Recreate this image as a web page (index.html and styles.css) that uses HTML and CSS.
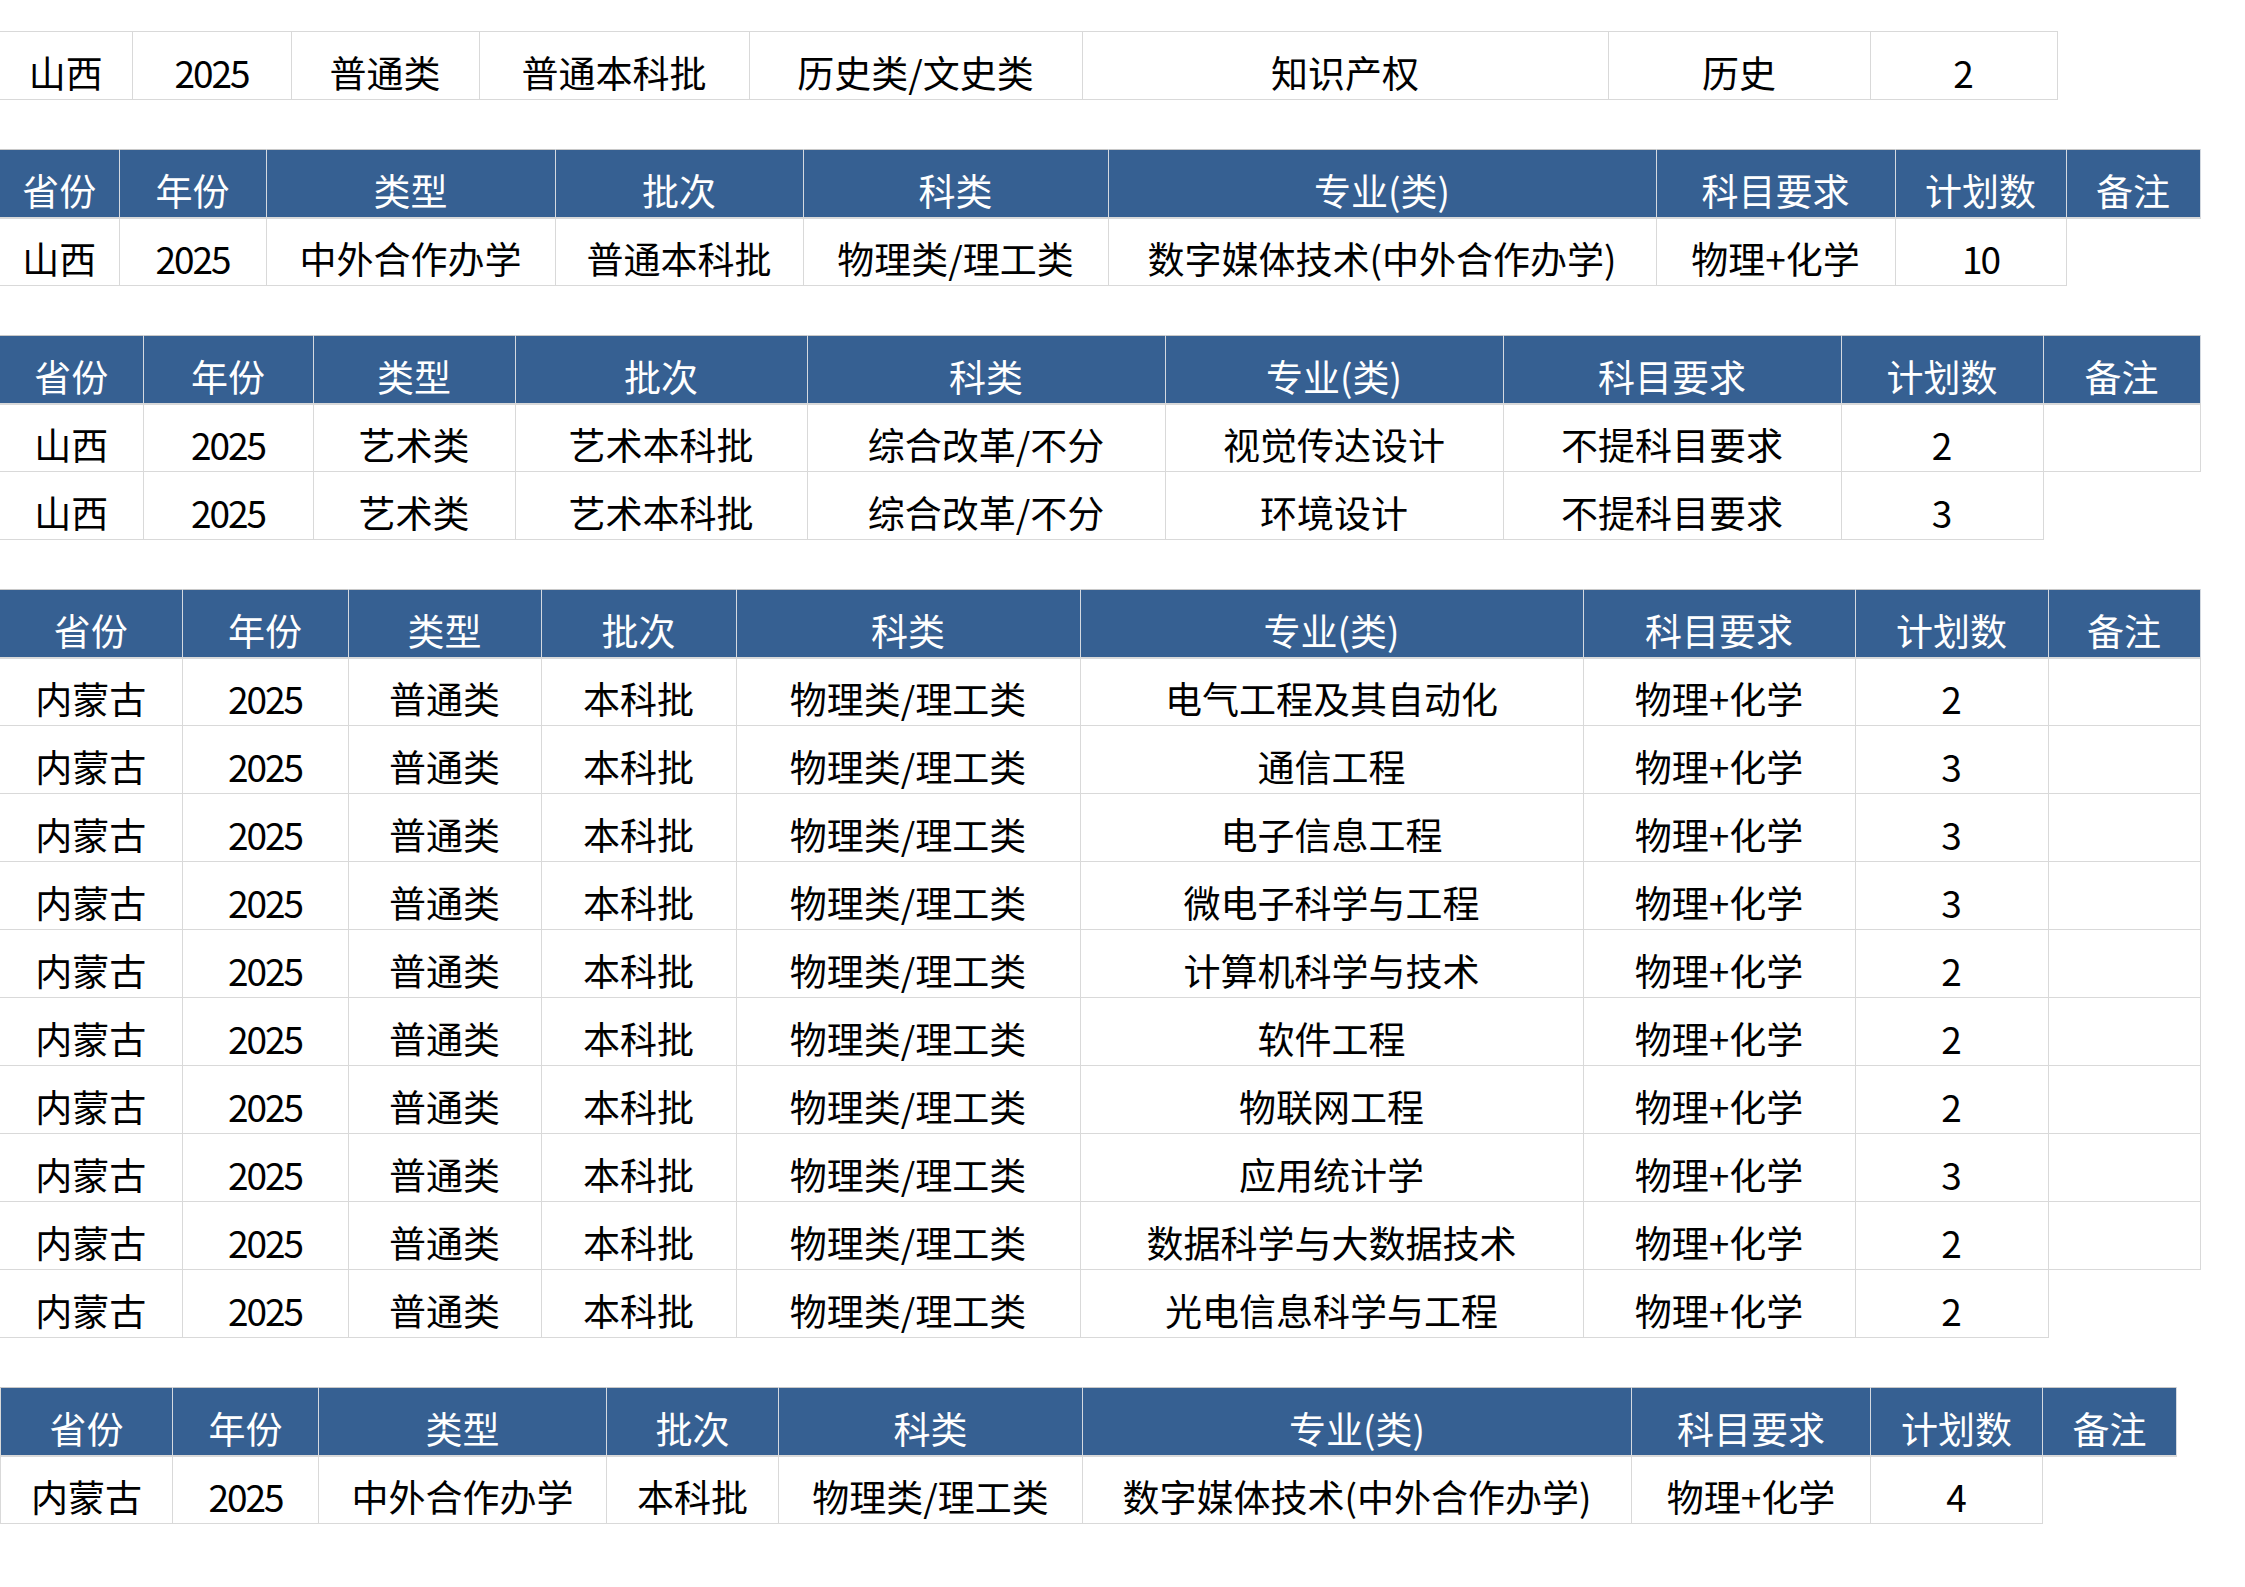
FILE: index.html
```html
<!DOCTYPE html>
<html lang="zh-CN">
<head>
<meta charset="utf-8">
<title>招生计划</title>
<link rel="stylesheet" href="styles.css">
</head>
<body>
<div class="sheet">

<table class="grid t1">
<tbody>
<tr><td>山西</td><td class="n">2025</td><td>普通类</td><td>普通本科批</td><td>历史类/文史类</td><td>知识产权</td><td>历史</td><td>2</td></tr>
</tbody>
</table>

<table class="grid t2">
<thead>
<tr><th>省份</th><th>年份</th><th>类型</th><th>批次</th><th>科类</th><th>专业(类)</th><th>科目要求</th><th>计划数</th><th>备注</th></tr>
</thead>
<tbody>
<tr><td>山西</td><td class="n">2025</td><td>中外合作办学</td><td>普通本科批</td><td>物理类/理工类</td><td>数字媒体技术(中外合作办学)</td><td>物理+化学</td><td class="n">10</td></tr>
</tbody>
</table>

<table class="grid t3">
<thead>
<tr><th>省份</th><th>年份</th><th>类型</th><th>批次</th><th>科类</th><th>专业(类)</th><th>科目要求</th><th>计划数</th><th>备注</th></tr>
</thead>
<tbody>
<tr><td>山西</td><td class="n">2025</td><td>艺术类</td><td>艺术本科批</td><td>综合改革/不分</td><td>视觉传达设计</td><td>不提科目要求</td><td>2</td><td></td></tr>
<tr><td>山西</td><td class="n">2025</td><td>艺术类</td><td>艺术本科批</td><td>综合改革/不分</td><td>环境设计</td><td>不提科目要求</td><td>3</td></tr>
</tbody>
</table>

<table class="grid t4">
<thead>
<tr><th>省份</th><th>年份</th><th>类型</th><th>批次</th><th>科类</th><th>专业(类)</th><th>科目要求</th><th>计划数</th><th>备注</th></tr>
</thead>
<tbody>
<tr><td>内蒙古</td><td class="n">2025</td><td>普通类</td><td>本科批</td><td>物理类/理工类</td><td>电气工程及其自动化</td><td>物理+化学</td><td>2</td><td></td></tr>
<tr><td>内蒙古</td><td class="n">2025</td><td>普通类</td><td>本科批</td><td>物理类/理工类</td><td>通信工程</td><td>物理+化学</td><td>3</td><td></td></tr>
<tr><td>内蒙古</td><td class="n">2025</td><td>普通类</td><td>本科批</td><td>物理类/理工类</td><td>电子信息工程</td><td>物理+化学</td><td>3</td><td></td></tr>
<tr><td>内蒙古</td><td class="n">2025</td><td>普通类</td><td>本科批</td><td>物理类/理工类</td><td>微电子科学与工程</td><td>物理+化学</td><td>3</td><td></td></tr>
<tr><td>内蒙古</td><td class="n">2025</td><td>普通类</td><td>本科批</td><td>物理类/理工类</td><td>计算机科学与技术</td><td>物理+化学</td><td>2</td><td></td></tr>
<tr><td>内蒙古</td><td class="n">2025</td><td>普通类</td><td>本科批</td><td>物理类/理工类</td><td>软件工程</td><td>物理+化学</td><td>2</td><td></td></tr>
<tr><td>内蒙古</td><td class="n">2025</td><td>普通类</td><td>本科批</td><td>物理类/理工类</td><td>物联网工程</td><td>物理+化学</td><td>2</td><td></td></tr>
<tr><td>内蒙古</td><td class="n">2025</td><td>普通类</td><td>本科批</td><td>物理类/理工类</td><td>应用统计学</td><td>物理+化学</td><td>3</td><td></td></tr>
<tr><td>内蒙古</td><td class="n">2025</td><td>普通类</td><td>本科批</td><td>物理类/理工类</td><td>数据科学与大数据技术</td><td>物理+化学</td><td>2</td><td></td></tr>
<tr><td>内蒙古</td><td class="n">2025</td><td>普通类</td><td>本科批</td><td>物理类/理工类</td><td>光电信息科学与工程</td><td>物理+化学</td><td>2</td></tr>
</tbody>
</table>

<table class="grid t5">
<thead>
<tr><th>省份</th><th>年份</th><th>类型</th><th>批次</th><th>科类</th><th>专业(类)</th><th>科目要求</th><th>计划数</th><th>备注</th></tr>
</thead>
<tbody>
<tr><td>内蒙古</td><td class="n">2025</td><td>中外合作办学</td><td>本科批</td><td>物理类/理工类</td><td>数字媒体技术(中外合作办学)</td><td>物理+化学</td><td>4</td></tr>
</tbody>
</table>

</div>
</body>
</html>
```

FILE: styles.css
```css
html, body {
  margin: 0;
  padding: 0;
  background: #ffffff;
}

.sheet {
  padding-top: 31px;
  display: flex;
  flex-direction: column;
  align-items: flex-start;
  gap: 49px;
  font-family: "Noto Sans CJK SC", "Noto Sans", sans-serif;
  color: #000000;
}

.grid {
  border-collapse: collapse;
  table-layout: fixed;
}

.grid th,
.grid td {
  height: 68px;
  box-sizing: border-box;
  padding: 0 0 5px 0;
  border: 1px solid #d9d9d9;
  text-align: center;
  vertical-align: bottom;
  white-space: nowrap;
  font-size: 37px;
  line-height: 44px;
  font-weight: 400;
}

.grid td.n {
  letter-spacing: -2px;
}

.grid th {
  background: #366092;
  color: #ffffff;
  border-color: #d4d9e0;
  border-top-color: #c8c8c8;
  border-bottom: 2px solid #d9d9d9;
}

.grid tr > :first-child {
  border-left: none;
}

.t5 tr > :first-child {
  border-left: 1px solid #d9d9d9;
}

/* column widths */
.t1 { width: 2057px; }
.t1 td:nth-child(1) { width: 132px; }
.t1 td:nth-child(2) { width: 159px; }
.t1 td:nth-child(3) { width: 188px; }
.t1 td:nth-child(4) { width: 270px; }
.t1 td:nth-child(5) { width: 333px; }
.t1 td:nth-child(6) { width: 526px; }
.t1 td:nth-child(7) { width: 262px; }
.t1 td:nth-child(8) { width: 187px; }

.t2 { width: 2200px; }
.t2 th:nth-child(1) { width: 119px; }
.t2 th:nth-child(2) { width: 147px; }
.t2 th:nth-child(3) { width: 289px; }
.t2 th:nth-child(4) { width: 248px; }
.t2 th:nth-child(5) { width: 305px; }
.t2 th:nth-child(6) { width: 548px; }
.t2 th:nth-child(7) { width: 239px; }
.t2 th:nth-child(8) { width: 171px; }
.t2 th:nth-child(9) { width: 134px; }

.t3 { width: 2200px; }
.t3 th:nth-child(1) { width: 143px; }
.t3 th:nth-child(2) { width: 170px; }
.t3 th:nth-child(3) { width: 202px; }
.t3 th:nth-child(4) { width: 292px; }
.t3 th:nth-child(5) { width: 358px; }
.t3 th:nth-child(6) { width: 338px; }
.t3 th:nth-child(7) { width: 338px; }
.t3 th:nth-child(8) { width: 202px; }
.t3 th:nth-child(9) { width: 157px; }

.t4 { width: 2200px; }
.t4 th:nth-child(1) { width: 182px; }
.t4 th:nth-child(2) { width: 166px; }
.t4 th:nth-child(3) { width: 193px; }
.t4 th:nth-child(4) { width: 195px; }
.t4 th:nth-child(5) { width: 344px; }
.t4 th:nth-child(6) { width: 503px; }
.t4 th:nth-child(7) { width: 272px; }
.t4 th:nth-child(8) { width: 193px; }
.t4 th:nth-child(9) { width: 152px; }

.t5 { width: 2176px; }
.t5 th:nth-child(1) { width: 172px; }
.t5 th:nth-child(2) { width: 146px; }
.t5 th:nth-child(3) { width: 288px; }
.t5 th:nth-child(4) { width: 172px; }
.t5 th:nth-child(5) { width: 304px; }
.t5 th:nth-child(6) { width: 549px; }
.t5 th:nth-child(7) { width: 239px; }
.t5 th:nth-child(8) { width: 172px; }
.t5 th:nth-child(9) { width: 134px; }
```
